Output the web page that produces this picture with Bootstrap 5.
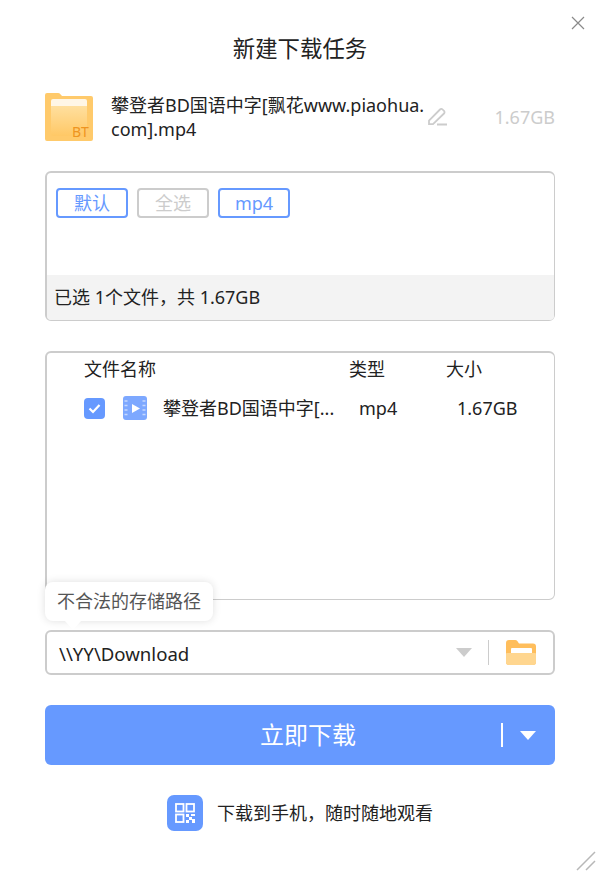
<!DOCTYPE html>
<html lang="zh-CN">
<head>
<meta charset="utf-8">
<title>新建下载任务</title>
<link rel="stylesheet" href="https://cdn.jsdelivr.net/npm/bootstrap@5.3.0/dist/css/bootstrap.min.css">
<style>
html,body{height:100%;}
body{background:#fff;color:#222;font-family:"Noto Sans","Noto Sans CJK SC",sans-serif;font-size:18px;}
.dlg{position:relative;width:600px;height:876px;padding:0 45px;overflow:hidden;}
.close-x{position:absolute;top:16px;right:15px;width:14px;height:14px;}
.grip{position:absolute;right:4px;bottom:5px;width:20px;height:20px;}
.dlg-title{font-size:22.4px;line-height:30px;text-align:center;margin:0;padding-top:34px;height:93px;font-weight:400;color:#222;}
.file-row{height:48px;margin-bottom:30px;}
.file-name{width:317px;margin-left:18px;line-height:24px;font-size:18px;word-break:break-all;}
.file-size{margin-left:auto;color:#ccc;font-size:18px;line-height:48px;}
.box{border:2px solid #ccc;border-radius:6px;}
.box-tags{height:150px;margin-bottom:30px;border-right-width:1px;border-bottom-width:1px;}
.tag-row{padding:15px 9px 0;gap:9px;height:102px;}
.tagb{width:72px;height:30px;border:2px solid #69f;border-radius:4px;color:#69f;font-size:18px;line-height:26px;text-align:center;}
.tagb.off{border-color:#ccc;color:#ccc;}
.tag-foot{background:#f3f3f3;height:45px;line-height:45px;padding-left:7px;font-size:18px;border-radius:0 0 4px 4px;}
.box-files{height:249px;margin-bottom:30px;border-right-width:1px;border-bottom-width:1px;}
.cn{flex:none;}
.c1{width:302px;padding-left:37px;}
.c2{width:97px;}
.head-row{height:33px;line-height:33px;font-size:18px;}
.body-row{height:44px;line-height:44px;font-size:18px;}
.chk{width:21px;height:21px;background:#69f;border-radius:4px;margin-left:37px;flex:none;}
.vid{margin-left:18px;flex:none;}
.fn{width:196px;margin-left:16px;flex:none;white-space:nowrap;}
.ty{width:98px;flex:none;}
.path-wrap{position:relative;}
.tip{position:absolute;left:0;top:-48px;width:168px;height:39px;line-height:39px;background:#fff;border-radius:8px;box-shadow:0 0 8px rgba(0,0,0,.13);color:#555;font-size:18px;text-align:center;}
.tip::after{content:"";position:absolute;left:20px;bottom:-9px;border-left:8px solid transparent;border-right:8px solid transparent;border-top:9px solid #fff;}
.path-box{height:45px;padding-left:12px;margin-bottom:30px;}
.path-text{font-size:18.6px;line-height:41px;padding-top:1px;flex:1;}
.tri{width:0;height:0;border-left:8px solid transparent;border-right:8px solid transparent;border-top:9px solid #ccc;flex:none;}
.sep{width:1px;height:25px;background:#ccc;margin:0 17px 0 16px;flex:none;}
.fold{margin-right:17px;flex:none;}
.go{width:100%;height:60px;background:#69f;border:0;border-radius:6px;color:#fff;font-size:24px;display:flex;align-items:center;padding:0;margin-bottom:30px;}
.go:hover,.go:active{background:#69f!important;color:#fff!important;}
.go-text{flex:none;width:456px;padding-left:70px;text-align:center;}
.go-sep{width:2px;height:24px;background:#fff;flex:none;}
.tri-w{border-top-color:#fff;margin-left:17px;}
.mobile{padding-left:122px;gap:14px;height:36px;font-size:18px;color:#222;}
.qr{width:36px;height:36px;background:#69f;border-radius:7px;flex:none;}
</style>
</head>
<body>
<div class="dlg">
  <svg class="close-x" viewBox="0 0 14 14"><path d="M1 1L13 13M13 1L1 13" stroke="#8a8a8a" stroke-width="1.2" fill="none"/></svg>
  <h1 class="dlg-title">新建下载任务</h1>

  <div class="file-row d-flex align-items-center">
    <svg width="48" height="48" viewBox="0 0 48 48" class="flex-shrink-0">
      <defs>
        <linearGradient id="gf" x1="0" y1="0" x2="0" y2="1"><stop offset="0" stop-color="#ffe3a8"/><stop offset="1" stop-color="#ffc866"/></linearGradient>
      </defs>
      <path d="M0 2a2 2 0 0 1 2-2h11a3 3 0 0 1 2.4 1.2L17 3h29a2 2 0 0 1 2 2v41a2 2 0 0 1-2 2H2a2 2 0 0 1-2-2z" fill="#ffca6b"/>
      <path d="M6 8h36v33a2 2 0 0 1-2 2H8a2 2 0 0 1-2-2z" fill="url(#gf)"/>
      <path d="M8 6h32a2 2 0 0 1 2 2v5H6V8a2 2 0 0 1 2-2z" fill="#fff6e6"/>
      <text x="27" y="44" font-family="Noto Sans,sans-serif" font-size="14" fill="#ee9420">BT</text>
    </svg>
    <div class="file-name">攀登者BD国语中字[飘花www.piaohua.com].mp4</div>
    <svg class="flex-shrink-0" width="20" height="18" viewBox="0 0 20 18"><path d="M1 16.2V12.5L12 1.5a1.8 1.8 0 0 1 2.6 0l1.4 1.4a1.8 1.8 0 0 1 0 2.6L5 16.2H1zM9 16.5h10" stroke="#ccc" stroke-width="1.8" fill="none"/></svg>
    <div class="file-size">1.67GB</div>
  </div>

  <div class="box box-tags">
    <div class="tag-row d-flex align-items-start">
      <div class="tagb">默认</div>
      <div class="tagb off">全选</div>
      <div class="tagb">mp4</div>
    </div>
    <div class="tag-foot">已选 1个文件，共 1.67GB</div>
  </div>

  <div class="box box-files">
    <div class="head-row d-flex">
      <div class="cn c1">文件名称</div>
      <div class="cn c2">类型</div>
      <div class="cn">大小</div>
    </div>
    <div class="body-row d-flex align-items-center">
      <div class="chk d-flex align-items-center justify-content-center">
        <svg width="13" height="11" viewBox="0 0 13 11"><path d="M1.5 5.5L5 9L11.5 2" stroke="#fff" stroke-width="2.2" fill="none"/></svg>
      </div>
      <svg class="vid" width="24" height="24" viewBox="0 0 24 24">
        <rect width="24" height="24" rx="3" fill="#7da8ff"/>
        <path d="M9 8l8 4.5-8 4.5z" fill="#fff"/>
        <path d="M1.5 5h3M1.5 9.5h3M1.5 14h3M1.5 18.5h3M19.5 5h3M19.5 9.5h3M19.5 14h3M19.5 18.5h3" stroke="#c5d8ff" stroke-width="1.5"/>
      </svg>
      <div class="fn">攀登者BD国语中字[...</div>
      <div class="ty">mp4</div>
      <div>1.67GB</div>
    </div>
  </div>

  <div class="path-wrap">
    <div class="tip">不合法的存储路径</div>
    <div class="box path-box d-flex align-items-center">
      <div class="path-text">\\YY\Download</div>
      <div class="tri"></div>
      <div class="sep"></div>
      <svg class="fold" width="30" height="25" viewBox="0 0 30 25">
        <path d="M0 3a3 3 0 0 1 3-3h6a3 3 0 0 1 2.5 1.3L13 3.5h14a3 3 0 0 1 3 3V22a3 3 0 0 1-3 3H3a3 3 0 0 1-3-3z" fill="#ffbe5c"/>
        <path d="M6 8h19a1 1 0 0 1 1 1v4H5V9a1 1 0 0 1 1-1z" fill="#fff"/>
        <path d="M0 14a1 1 0 0 1 1-1h28a1 1 0 0 1 1 1v8a3 3 0 0 1-3 3H3a3 3 0 0 1-3-3z" fill="#ffd68f"/>
      </svg>
    </div>
  </div>

  <button type="button" class="btn go">
    <span class="go-text">立即下载</span>
    <span class="go-sep"></span>
    <span class="tri tri-w"></span>
  </button>

  <div class="mobile d-flex align-items-center">
    <div class="qr d-flex align-items-center justify-content-center">
      <svg width="20" height="20" viewBox="0 0 20 20" fill="none">
        <rect x="1" y="1" width="7.5" height="7.5" stroke="#fff" stroke-width="1.8"/>
        <rect x="11.5" y="1" width="7.5" height="7.5" stroke="#fff" stroke-width="1.8"/>
        <rect x="1" y="11.5" width="7.5" height="7.5" stroke="#fff" stroke-width="1.8"/>
        <path d="M11 11h3v3h-3zM16 11h4v2h-4zM14 14h3v3h-3zM17 16h3v4h-3zM11 17h3v3h-3z" fill="#fff"/>
      </svg>
    </div>
    <div>下载到手机，随时随地观看</div>
  </div>

  <svg class="grip" viewBox="0 0 20 20"><path d="M1 19L19 1M10 19L19 10" stroke="#b8b8b8" stroke-width="1.5" fill="none"/></svg>
</div>
<script src="https://cdn.jsdelivr.net/npm/bootstrap@5.3.0/dist/js/bootstrap.bundle.min.js"></script>
</body>
</html>
